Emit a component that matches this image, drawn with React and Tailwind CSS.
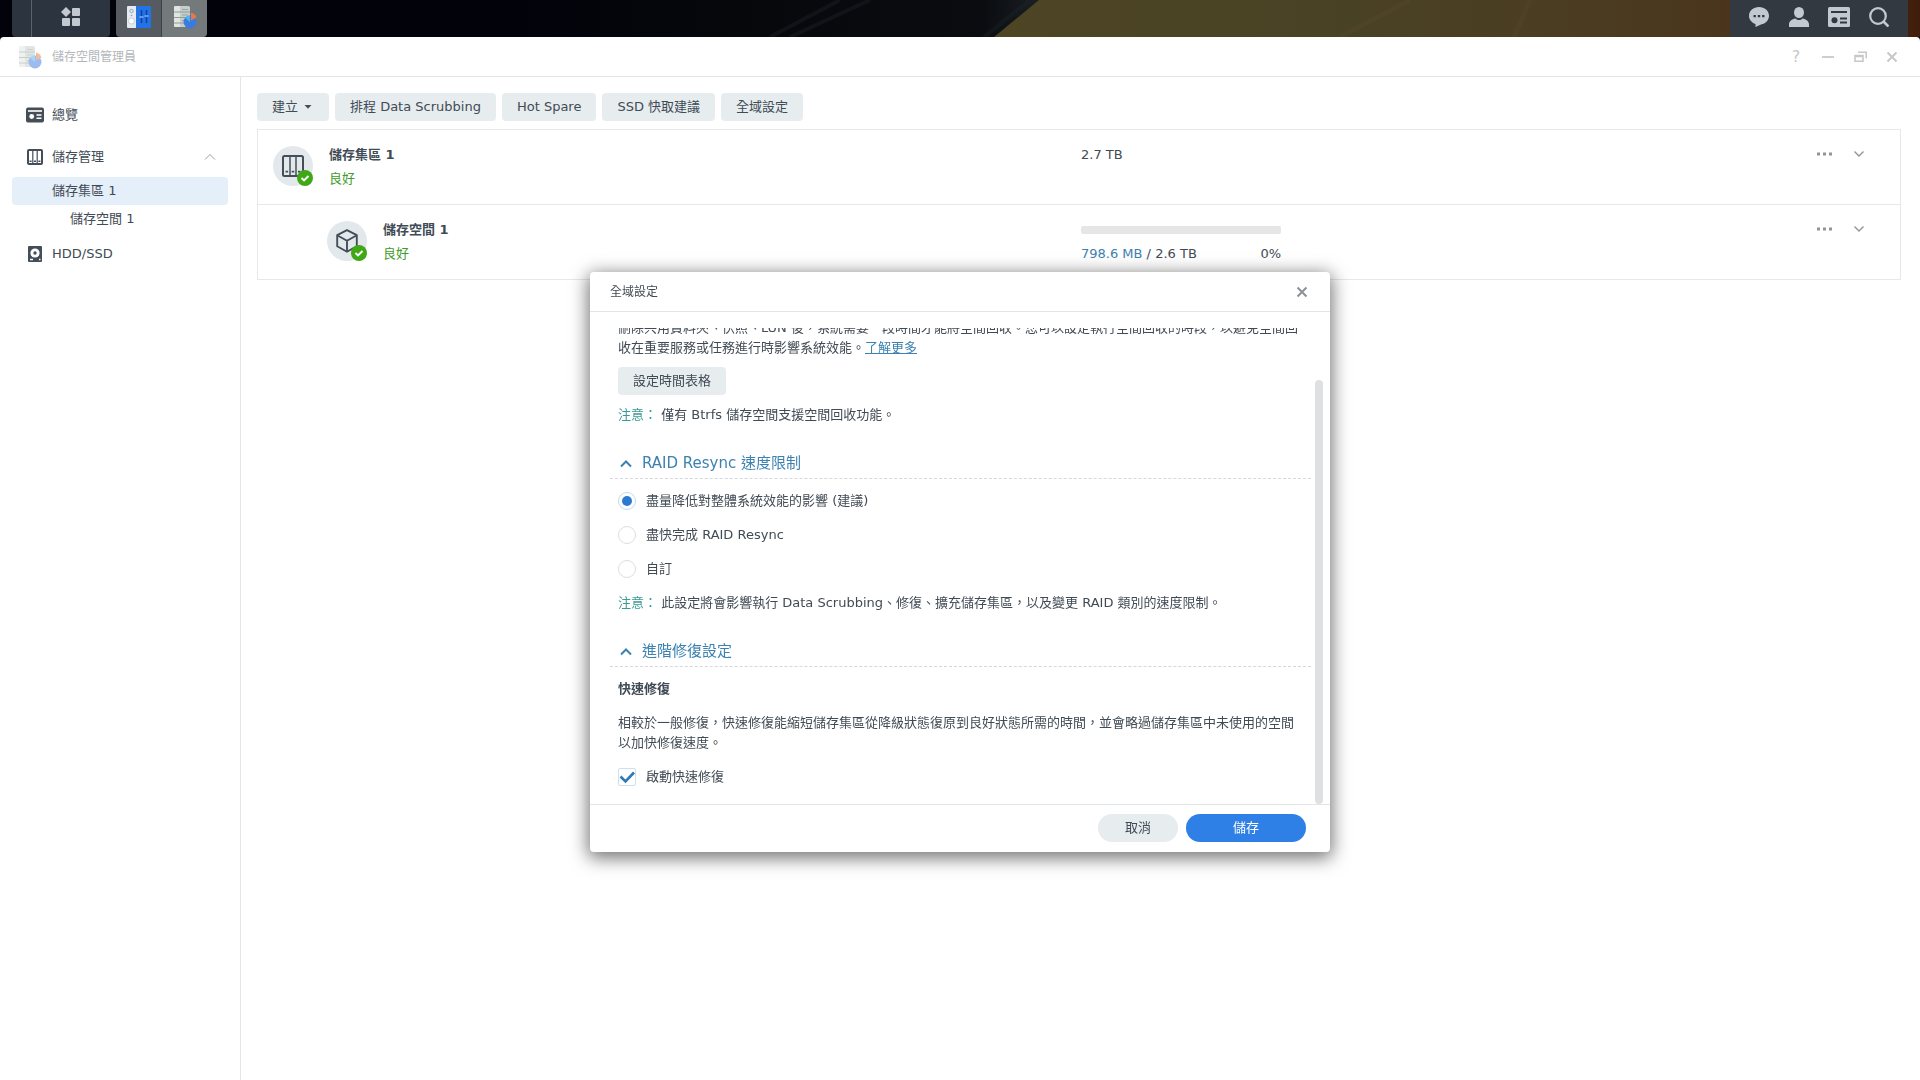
import React from 'react';

const PoolIcon = ({ className = '' }) => (
  <svg viewBox="0 0 24 24" className={className} aria-hidden="true">
    <rect x="2" y="2" width="20" height="20" rx="1.5" fill="none" stroke="currentColor" strokeWidth="2" />
    <path d="M9 2v20M15 2v20" stroke="currentColor" strokeWidth="1.5" />
    <path d="M4.5 17.6h2.6M10.700 17.600h2.600M16.900 17.600h2.600" stroke="currentColor" strokeWidth="1.600" />
  </svg>
);

const BayIcon = () => (
  <svg viewBox="0 0 18 18" className="h-[18px] w-[18px]" aria-hidden="true">
    <path
      fillRule="evenodd"
      d="M3 1h12a2 2 0 0 1 2 2v12a2 2 0 0 1-2 2H3a2 2 0 0 1-2-2V3a2 2 0 0 1 2-2zM3 3v12h3.200V3zM7.400 3v12h3.200V3zM11.800 3v12H15V3z"
      fill="#454e57"
    />
    <path d="M3.600 13.200h2M8 13.200h2M12.400 13.200h2" stroke="#454e57" strokeWidth="1.400" />
  </svg>
);

const OverviewIcon = ({ className = '' }) => (
  <svg viewBox="0 0 18 16" className={className} aria-hidden="true">
    <rect y=".5" width="18" height="15" rx="2" fill="currentColor" />
    <path d="M2 4h14" stroke="#fff" strokeWidth="1.600" />
    <circle cx="5.700" cy="9.500" r="2.400" fill="#fff" />
    <path d="M10.500 8h5M10.500 11.300h5" stroke="#fff" strokeWidth="1.600" />
  </svg>
);

const DiskIcon = () => (
  <svg viewBox="0 0 18 18" className="h-[18px] w-[18px]" aria-hidden="true">
    <rect x="2" y="1" width="14" height="16" rx="1" fill="#454e57" />
    <circle cx="9" cy="8" r="4.600" fill="#fff" />
    <circle cx="9" cy="8" r="1.700" fill="#454e57" />
    <path d="M4 14.500h3M13 14.500h1.500" stroke="#fff" strokeWidth="1.400" />
  </svg>
);

const CubeIcon = ({ className = '' }) => (
  <svg viewBox="0 0 24 24" className={className} fill="none" stroke="currentColor" strokeWidth="1.900" strokeLinejoin="round" aria-hidden="true">
    <path d="M12 1.200l9.800 5v11L12 22.800l-9.800-5.600v-11zM2.200 6.200L12 11.800l9.800-5.600M12 11.800v11" />
  </svg>
);

const StorageLogo = ({ className = '' }) => (
  <svg viewBox="0 0 24 24" className={className} aria-hidden="true">
    <path d="M2 1h12l3 1v19l-3 1H2a1 1 0 0 1-1-1V2a1 1 0 0 1 1-1z" fill="#dfe5e1" />
    <path d="M7 1h8l2 1v19l-2 1H7z" fill="#c5ceca" />
    <path d="M1 7h16M1 12.500h16M1 18h10" stroke="#929b98" strokeWidth="1" />
    <path d="M9 4.500h6M9 10h6M9 15.500h3" stroke="#9aa4a0" strokeWidth="1.200" />
    <circle cx="17" cy="17" r="6.500" fill="#3b7be0" />
    <path d="M17 17l-5-4.200a6.500 6.500 0 0 1 5-2.300z" fill="#4fb3ea" />
    <path d="M18 15.500V7.500a7.500 7.500 0 0 1 5.500 5z" fill="#e07a4a" />
  </svg>
);

const ControlPanelLogo = () => (
  <svg viewBox="0 0 26 24" className="h-6 w-[26px]" aria-hidden="true">
    <path d="M2 1h9v22H2a1 1 0 0 1-1-1V2a1 1 0 0 1 1-1z" fill="#e3eaf2" />
    <path d="M10 1h14a1 1 0 0 1 1 1v20a1 1 0 0 1-1 1H10z" fill="#2473e6" />
    <circle cx="5.500" cy="6" r="1.700" fill="none" stroke="#9aa6b3" />
    <circle cx="5.500" cy="10.500" r=".8" fill="#8895a3" />
    <circle cx="5.500" cy="16" r="3" fill="#fff" stroke="#b4bfca" strokeWidth=".7" />
    <path d="M15.500 5v13M20.500 5v13" stroke="#0d3f9c" strokeWidth="1.500" />
    <path d="M13.500 12h4M18.500 11h4" stroke="#7db0fa" strokeWidth="1.500" />
  </svg>
);

const Chevron = ({ up = false, className = '' }) => (
  <svg viewBox="0 0 12 12" className={className} fill="none" stroke="currentColor" aria-hidden="true">
    <path d={up ? 'M1 8.500l5-5 5 5' : 'M1.500 3.500L6 8l4.500-4.500'} />
  </svg>
);

const Cross = ({ className = '' }) => (
  <svg viewBox="0 0 12 12" className={className} fill="none" stroke="currentColor" aria-hidden="true">
    <path d="M1.500 1.500l9 9M10.500 1.500l-9 9" />
  </svg>
);

const Taskbar = () => (
  <header className="relative flex h-[37px] shrink-0 justify-between overflow-hidden bg-[#02030a] px-3">
    <svg viewBox="0 0 1920 37" preserveAspectRatio="none" className="absolute inset-0 h-full w-full" aria-hidden="true">
      <defs>
        <linearGradient id="planet" x1="990" x2="1920" y1="0" y2="0" gradientUnits="userSpaceOnUse">
          <stop offset="0" stopColor="#4d4524" />
          <stop offset=".35" stopColor="#494224" />
          <stop offset=".6" stopColor="#4b3d22" />
          <stop offset=".78" stopColor="#4a361d" />
          <stop offset=".97" stopColor="#48240f" />
          <stop offset="1" stopColor="#401c0c" />
        </linearGradient>
        <linearGradient id="space" x1="480" x2="1040" y1="0" y2="0" gradientUnits="userSpaceOnUse">
          <stop offset="0" stopColor="#01020a" />
          <stop offset=".6" stopColor="#08090c" />
          <stop offset=".9" stopColor="#0a0c10" />
          <stop offset="1" stopColor="#1a2024" />
        </linearGradient>
      </defs>
      <path d="M480 0h560l-46 37H480z" fill="url(#space)" />
      <path d="M1039 0h881v37H994z" fill="url(#planet)" />
      <path d="M1030 0l-46 37M840 0l-70 37M870 0l-80 37" stroke="#1d2429" strokeWidth="4" opacity=".4" />
      <path d="M1410 0l-70 37M1530 0l-16 37" stroke="#5a4a2a" strokeWidth="5" opacity=".3" />
    </svg>
    <div className="relative flex">
      <button aria-label="顯示桌面" className="w-5 rounded-bl border-r border-[#59616b] bg-[#2c343f]" />
      <button aria-label="主選單" className="flex w-[78px] justify-center rounded-br bg-[#2c343f] pt-[7px]">
        <svg viewBox="0 0 20 20" className="h-5 w-5" fill="#c3c9d1" aria-hidden="true">
          <path d="M5 0l5 5-5 5-5-5z" />
          <rect x="11" y="1" width="8" height="8" rx="1" />
          <rect x="1" y="11" width="8" height="8" rx="1" />
          <rect x="11" y="11" width="8" height="8" rx="1" />
        </svg>
      </button>
      <button aria-label="控制台" className="ml-1.5 flex w-[46px] justify-center rounded-bl border-r border-[#3a4147] bg-[#555b61] pt-[5px]">
        <ControlPanelLogo />
      </button>
      <button aria-label="儲存空間管理員" className="flex w-[45px] justify-center rounded-br bg-[#74797c] pt-[5px]">
        <StorageLogo className="h-6 w-6" />
      </button>
    </div>
    <div className="relative flex bg-[#323940] px-[9px] pb-[3px] text-[#c3c9d1]">
      <button aria-label="聊天" className="flex w-10 items-center justify-center">
        <svg viewBox="0 0 20 20" className="h-5 w-5" aria-hidden="true">
          <path d="M10 0c5.600 0 10 3.900 10 8.800 0 4.400-3.400 8-8 8.700L6.500 20v-3C2.700 15.800 0 12.600 0 8.800 0 3.900 4.400 0 10 0z" fill="currentColor" />
          <path d="M4.500 8h2.400v2.200H4.500zM8.800 8h2.400v2.200H8.800zM13.100 8h2.400v2.200h-2.400z" fill="#323940" />
        </svg>
      </button>
      <button aria-label="使用者" className="flex w-10 items-center justify-center">
        <svg viewBox="0 0 20 20" className="h-5 w-5" fill="currentColor" aria-hidden="true">
          <ellipse cx="10" cy="5.500" rx="5" ry="5.500" />
          <path d="M0 20v-2.500C0 14 3 12 6.500 11.500 7.500 12.500 8.700 13 10 13s2.500-.5 3.500-1.500C17 12 20 14 20 17.500V20z" />
        </svg>
      </button>
      <button aria-label="小工具" className="flex w-10 items-center justify-center">
        <svg viewBox="0 0 22 20" className="h-5 w-[22px]" aria-hidden="true">
          <rect width="22" height="20" rx="1.500" fill="currentColor" />
          <path d="M3 5h16M12 11.500h7M12 15.500h7" stroke="#323940" strokeWidth="2" />
          <circle cx="6.500" cy="13.300" r="3" fill="#323940" />
        </svg>
      </button>
      <button aria-label="搜尋" className="flex w-10 items-center justify-center">
        <svg viewBox="0 0 20 20" className="h-5 w-5" fill="none" stroke="currentColor" strokeWidth="2.200" aria-hidden="true">
          <circle cx="9" cy="9" r="7.800" />
          <path d="M14.500 14.500l5 5" strokeWidth="2.600" />
        </svg>
      </button>
    </div>
  </header>
);

const TitleBar = () => (
  <div className="flex h-10 shrink-0 items-center border-b border-[#e3e6e8] pr-3 pl-[18px] text-[#b3b6b9]">
    <StorageLogo className="h-6 w-6 opacity-50" />
    <h1 className="ml-2.5 flex-1 text-xs">儲存空間管理員</h1>
    <div className="flex text-[#c6c8ca]">
      <button aria-label="說明" className="flex w-8 items-center justify-center text-base leading-5">?</button>
      <button aria-label="最小化" className="flex w-8 items-center justify-center">
        <svg viewBox="0 0 12 12" className="h-3 w-3" aria-hidden="true"><path d="M0 6h12" stroke="currentColor" strokeWidth="1.800" /></svg>
      </button>
      <button aria-label="還原" className="flex w-8 items-center justify-center">
        <svg viewBox="0 0 13 11" className="h-[11px] w-[13px]" fill="none" stroke="currentColor" strokeWidth="1.600" aria-hidden="true">
          <path d="M1 4.500h8v5.700H1zM1 5.400h8M4 1.200h8.200v6" />
        </svg>
      </button>
      <button aria-label="關閉視窗" className="flex w-8 items-center justify-center">
        <Cross className="h-3 w-3 stroke-2" />
      </button>
    </div>
  </div>
);

const Sidebar = () => (
  <nav className="w-[241px] shrink-0 border-r border-[#e3e6e8] px-3 pt-6">
    <ul>
      <li>
        <a href="#overview" className="flex h-7 items-center gap-2 pl-3.5">
          <OverviewIcon className="h-4 w-[18px] text-[#454e57]" />
          <span>總覽</span>
        </a>
      </li>
      <li className="mt-3.5">
        <a href="#storage" className="flex h-7 items-center gap-2 pr-3 pl-3.5">
          <BayIcon />
          <span className="flex-1">儲存管理</span>
          <Chevron up className="h-3 w-3 text-[#9aa0a6]" />
        </a>
        <ul className="pt-1.5">
          <li>
            <a href="#pool-1" className="flex h-7 items-center rounded bg-[#e4effa] pl-10">儲存集區 1</a>
          </li>
          <li>
            <a href="#volume-1" className="flex h-7 items-center pl-[58px]">儲存空間 1</a>
          </li>
        </ul>
      </li>
      <li className="mt-[7px]">
        <a href="#disks" className="flex h-7 items-center gap-2 pl-3.5">
          <DiskIcon />
          <span>HDD/SSD</span>
        </a>
      </li>
    </ul>
  </nav>
);

const actions = ['排程 Data Scrubbing', 'Hot Spare', 'SSD 快取建議', '全域設定'];

const StatusIcon = ({ children }) => (
  <div className="relative flex h-10 w-10 shrink-0 items-center justify-center rounded-full bg-[#e3e8ed] text-[#454e57]">
    {children}
    <svg viewBox="0 0 16 16" className="absolute right-0 bottom-0 h-4 w-4" aria-hidden="true">
      <circle cx="8" cy="8" r="8" fill="#3fa816" />
      <path d="M4.500 8l2.500 2.500 4.500-4.500" fill="none" stroke="#fff" strokeWidth="1.900" />
    </svg>
  </div>
);

const StorageRow = ({ icon, name, indent, children }) => (
  <div className="flex h-[75px] items-start border-b border-[#e6e9eb] pt-4">
    <div className={`flex w-1/2 gap-4 ${indent ? 'pl-[69px]' : 'pl-[15px]'}`}>
      <StatusIcon>{icon}</StatusIcon>
      <div className="-mt-[3px] leading-6">
        <h2 className="font-bold">{name} 1</h2>
        <p className="text-[#3f9c2a]">良好</p>
      </div>
    </div>
    <div className="-mt-[3px] flex-1 pl-0.5 leading-6">{children}</div>
    <div className="flex items-center gap-[18px] pr-[33px] text-[#8f959b]">
      <button aria-label={`${name}動作`} className="flex h-4 items-center">
        <svg viewBox="0 0 17 4" className="h-1 w-[17px]" fill="currentColor" aria-hidden="true">
          <rect x="1" y=".5" width="3" height="3" />
          <rect x="7" y=".5" width="3" height="3" />
          <rect x="13" y=".5" width="3" height="3" />
        </svg>
      </button>
      <button aria-label={`展開${name}`} className="flex h-4 w-4 items-center justify-center">
        <Chevron className="h-3 w-3 stroke-[1.4]" />
      </button>
    </div>
  </div>
);

const Content = () => (
  <main className="min-w-0 flex-1 pt-4 pr-[19px] pl-4">
    <div className="flex flex-wrap gap-1.5">
      <button className="flex h-7 items-center gap-1.5 rounded-sm bg-[#e7ecef] pr-[17px] pl-[15px]">
        建立
        <svg viewBox="0 0 8 4" className="h-1 w-2" aria-hidden="true"><path d="M.5 0h7L4 3.800z" fill="#454e57" /></svg>
      </button>
      {actions.map((label) => (
        <button key={label} className="h-7 rounded-sm bg-[#e7ecef] px-[15px]">{label}</button>
      ))}
    </div>
    <section className="mt-2 border border-b-0 border-[#e6e9eb]">
      <StorageRow name="儲存集區" icon={<PoolIcon className="h-6 w-6" />}>2.7 TB</StorageRow>
      <StorageRow name="儲存空間" indent icon={<CubeIcon className="h-6 w-6" />}>
        <div className="w-[200px]">
          <div className="flex h-6 items-center">
            <div className="h-2 w-full rounded-xs bg-[#e6e6e6]" />
          </div>
          <div className="flex justify-between">
            <span><span className="text-[#3c82b0]">798.6 MB</span> / 2.6 TB</span>
            <span>0%</span>
          </div>
        </div>
      </StorageRow>
    </section>
  </main>
);

const SectionTitle = ({ children }) => (
  <h3 className="-mx-2 mt-5 mb-2 border-b border-dashed border-[#d3d8dc]">
    <button className="flex h-[29px] w-full items-center gap-2.5 pl-2.5 text-[15px] text-[#3c82b0]">
      <Chevron up className="h-3 w-3 stroke-2" />
      {children}
    </button>
  </h3>
);

const Note = ({ children }) => (
  <p className="mt-1.5 py-1 leading-5">
    <span className="text-[#3a9a94]">注意：</span> {children}
  </p>
);

const speeds = ['盡量降低對整體系統效能的影響 (建議)', '盡快完成 RAID Resync', '自訂'];

const SettingsDialog = () => (
  <div className="fixed inset-0 flex items-center justify-center pt-11">
    <div role="dialog" aria-labelledby="dialog-title" className="flex h-[580px] max-h-full w-[740px] max-w-full flex-col rounded-sm bg-white shadow-[0_4px_18px_2px_rgba(0,0,0,0.55)]">
      <div className="flex h-10 shrink-0 items-center justify-between border-b border-[#e3e6e8] px-5">
        <h2 id="dialog-title" className="text-xs">全域設定</h2>
        <button aria-label="關閉" className="flex h-4 w-4 items-center justify-center text-[#8d9298]">
          <Cross className="h-3 w-3 stroke-2" />
        </button>
      </div>

      <div className="mt-4 flex min-h-0 flex-1 gap-1 pr-[7px] pl-5">
        <div className="flex min-w-0 flex-1 flex-col justify-end overflow-hidden px-2 pb-[13px]">
          <p className="leading-5">
            刪除共用資料夾、快照、LUN 後，系統需要一段時間才能將空間回收。您可以設定執行空間回收的時段，以避免空間回收在重要服務或任務進行時影響系統效能。
            <a href="#more" className="text-[#3c82b0] underline">了解更多</a>
          </p>
          <button className="mt-[9px] h-7 shrink-0 self-start rounded-sm bg-[#e7ecef] px-[15px]">設定時間表格</button>
          <Note>僅有 Btrfs 儲存空間支援空間回收功能。</Note>

          <SectionTitle>RAID Resync 速度限制</SectionTitle>
          <div className="flex flex-col gap-1.5">
            {speeds.map((label, index) => (
              <label key={label} className="flex h-7 items-center gap-2.5">
                <input
                  type="radio"
                  name="resync"
                  defaultChecked={index === 0}
                  className="grid h-[18px] w-[18px] appearance-none place-content-center rounded-full border border-[#dadfe3] before:h-2.5 before:w-2.5 before:rounded-full checked:border-[#bddcf2] checked:before:bg-[#2a7ad2]"
                />
                {label}
              </label>
            ))}
          </div>
          <Note>此設定將會影響執行 Data Scrubbing、修復、擴充儲存集區，以及變更 RAID 類別的速度限制。</Note>

          <SectionTitle>進階修復設定</SectionTitle>
          <h4 className="py-1 font-bold leading-5">快速修復</h4>
          <p className="mt-1.5 py-1 leading-5">
            相較於一般修復，快速修復能縮短儲存集區從降級狀態復原到良好狀態所需的時間，並會略過儲存集區中未使用的空間以加快修復速度。
          </p>
          <label className="relative mt-1.5 flex h-7 shrink-0 items-center gap-2.5">
            <input type="checkbox" defaultChecked className="peer h-[18px] w-[18px] appearance-none rounded-xs border border-[#cfe0ec]" />
            <svg viewBox="0 0 18 18" className="pointer-events-none absolute left-0 hidden h-[18px] w-[18px] peer-checked:block" aria-hidden="true">
              <path d="M2.500 8.500l5 5 8.500-9" fill="none" stroke="#2f79b5" strokeWidth="2.600" />
            </svg>
            啟動快速修復
          </label>
        </div>
        <div className="h-[89%] w-2 self-end rounded-full bg-[#dfe0e1]" />
      </div>

      <div className="flex h-12 shrink-0 items-start justify-end gap-2 border-t border-[#e3e6e8] pt-[9px] pr-6">
        <button className="h-7 w-20 rounded-full bg-[#e7ecef]">取消</button>
        <button className="h-7 w-[120px] rounded-full bg-[#2e80e6] text-white">儲存</button>
      </div>
    </div>
  </div>
);

const App = () => (
  <div lang="zh-Hant" className="flex min-h-screen flex-col bg-[#02030a] font-['DejaVu_Sans','Noto_Sans_CJK_TC',sans-serif] text-[13px] text-[#414b55]">
    <Taskbar />
    <div className="flex flex-1 flex-col rounded-t bg-white">
      <TitleBar />
      <div className="flex flex-1">
        <Sidebar />
        <Content />
      </div>
    </div>
    <SettingsDialog />
  </div>
);

export default App;
